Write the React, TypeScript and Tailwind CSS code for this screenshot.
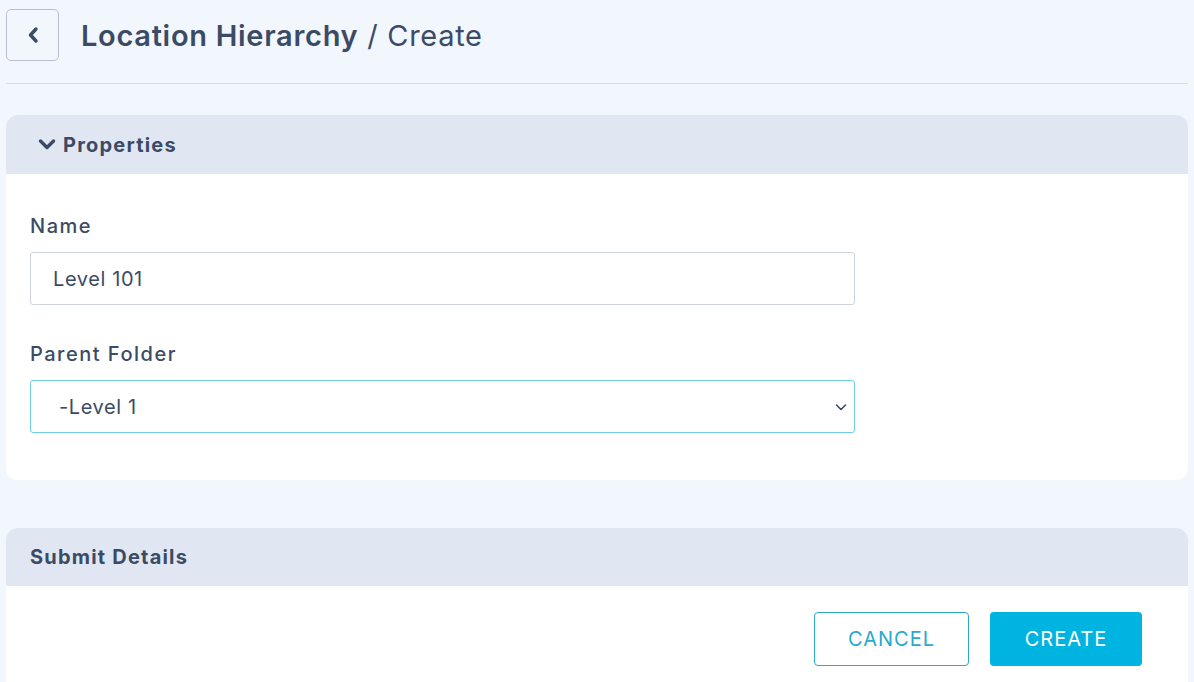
import React from "react";

const font = { fontFamily: "Inter, 'Noto Sans', sans-serif" };

const App = () => {
  return (
    <div
      className="min-h-[682px] bg-[#f2f6fd] pl-[6px] pr-[6px] text-[#3b4b66]"
      style={font}
    >
      <div className="flex items-center gap-[22px] pt-[9px] pb-[22px] border-b border-[#d7dde6]">
        <button className="w-[53px] h-[52px] flex items-center justify-center rounded-[5px] border border-[#b7c0cc] bg-[#f2f6fd]">
          <svg width="14" height="18" viewBox="0 0 14 18" fill="none">
            <path d="M10 3L4.5 9L10 15" stroke="#3b4b66" strokeWidth="3.4" strokeLinecap="round" strokeLinejoin="round" />
          </svg>
        </button>
        <h1 className="text-[29px] tracking-[0.7px] leading-none">
          <span className="font-semibold">Location Hierarchy</span>
          <span className="font-normal"> / Create</span>
        </h1>
      </div>

      <div className="mt-[31px] rounded-[12px] bg-white overflow-hidden">
        <div className="h-[59px] bg-[#e1e7f2] flex items-center gap-[7px] pl-[32px]">
          <svg width="18" height="13" viewBox="0 0 18 13" fill="none">
            <path d="M2.5 3L9 9.5L15.5 3" stroke="#3b4b66" strokeWidth="3.4" strokeLinecap="round" strokeLinejoin="round" />
          </svg>
          <span className="text-[20px] font-bold tracking-[1.2px]">Properties</span>
        </div>
        <div className="px-[24px] pt-[40px] pb-[47px]">
          <label className="block text-[20px] font-medium leading-[24px] tracking-[1.5px]">Name</label>
          <input
            defaultValue="Level 101"
            className="mt-[14px] w-[825px] h-[53px] rounded-[3px] border border-[#cfd4da] px-[22px] text-[20px] tracking-[0.6px] text-[#3b4b66] outline-none"
          />
          <label className="block mt-[37px] text-[20px] font-medium leading-[24px] tracking-[1.5px]">Parent Folder</label>
          <div className="mt-[14px] w-[825px] h-[53px] rounded-[3px] border border-[#6fcfdf] flex items-center justify-between pl-[28px] pr-[6px]">
            <span className="text-[20px] tracking-[0.6px]">-Level 1</span>
            <svg width="14" height="10" viewBox="0 0 14 10" fill="none">
              <path d="M2.5 3L7 7.5L11.5 3" stroke="#3b4b66" strokeWidth="1.6" strokeLinecap="round" strokeLinejoin="round" />
            </svg>
          </div>
        </div>
      </div>

      <div className="mt-[48px] rounded-t-[12px] bg-white overflow-hidden">
        <div className="h-[58px] bg-[#e1e7f2] flex items-center pl-[24px]">
          <span className="text-[20px] font-bold tracking-[1.2px]">Submit Details</span>
        </div>
        <div className="flex justify-end gap-[21px] pt-[26px] pb-[20px] pr-[46px]">
          <button className="w-[155px] h-[54px] rounded-[4px] border border-[#29a9cc] text-[#29a9cc] text-[20px] tracking-[1px] bg-white">
            CANCEL
          </button>
          <button className="w-[152px] h-[54px] rounded-[4px] bg-[#00b4e1] text-white text-[20px] tracking-[1px]">
            CREATE
          </button>
        </div>
      </div>
    </div>
  );
};

export default App;
